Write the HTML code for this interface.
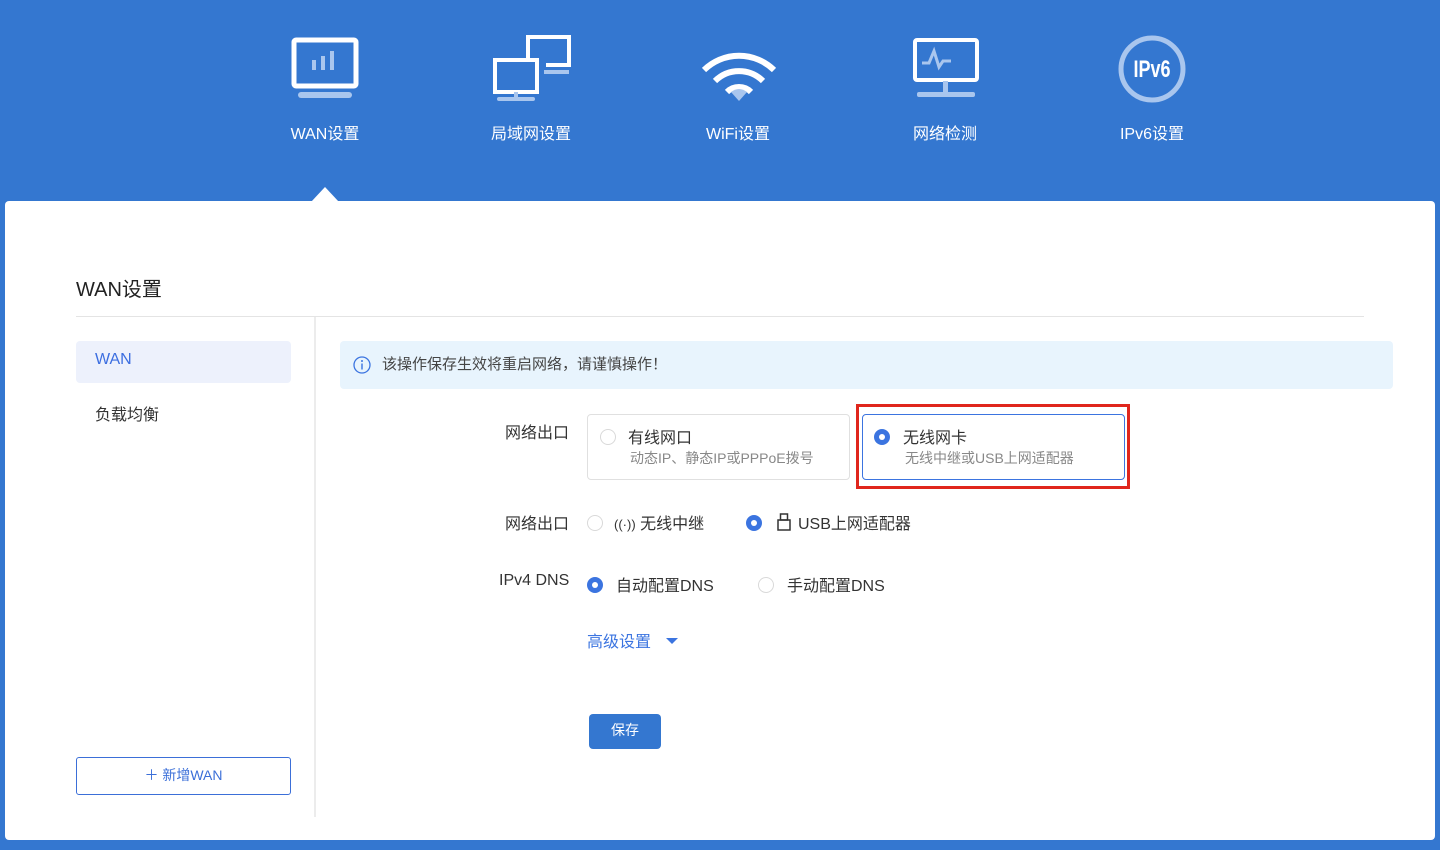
<!DOCTYPE html>
<html><head><meta charset="utf-8"><style>
*{margin:0;padding:0;box-sizing:border-box}
body{width:1440px;height:850px;background:#3477d0;position:relative;overflow:hidden;font-family:"Liberation Sans","Noto Sans CJK SC",sans-serif;color:#333}
.a{position:absolute}
.nav{color:#fff;font-size:16px;text-align:center;width:160px}
.card{left:5px;top:201px;width:1430px;height:639px;background:#fff;border-radius:4px}
.radio{position:absolute;width:16px;height:16px;border-radius:50%;border:1px solid #d9d9d9;background:#fff}
.radio.on{border:none;background:#3b74e0}
.radio.on:after{content:"";position:absolute;left:5px;top:5px;width:6px;height:6px;border-radius:50%;background:#fff}
.lbl{font-size:16px;color:#333}
</style></head><body>
<svg class="a" style="left:290px;top:36px" width="70" height="64"><rect x="4" y="4" width="62" height="46" rx="2" fill="none" stroke="#fff" stroke-width="5"/><rect x="8" y="56" width="54" height="6" rx="3" fill="#a9c6ee"/><rect x="22" y="24" width="4" height="10" fill="#a9c6ee"/><rect x="31" y="20" width="4" height="14" fill="#a9c6ee"/><rect x="40" y="15" width="4" height="19" fill="#a9c6ee"/></svg>
<svg class="a" style="left:492px;top:34px" width="80" height="70"><path d="M36 24 V3 H77 V31 H54" fill="none" stroke="#fff" stroke-width="4"/><rect x="52" y="36" width="25" height="4" fill="#a9c6ee"/><rect x="3" y="26" width="42" height="32" fill="none" stroke="#fff" stroke-width="4"/><rect x="22" y="58" width="4" height="6" fill="#a9c6ee"/><rect x="5" y="63" width="38" height="4" rx="2" fill="#a9c6ee"/></svg>
<svg class="a" style="left:700px;top:44px" width="78" height="58"><path d="M4 26 A50 50 0 0 1 74 26" fill="none" stroke="#fff" stroke-width="6"/><path d="M15 37 A34 34 0 0 1 63 37" fill="none" stroke="#fff" stroke-width="6"/><path d="M27 48 A17 17 0 0 1 51 48" fill="none" stroke="#fff" stroke-width="6"/><path d="M31 48 Q39 42 47 48 L39 57 Z" fill="#a9c6ee"/></svg>
<svg class="a" style="left:912px;top:37px" width="68" height="62"><rect x="3" y="3" width="62" height="40" rx="2" fill="none" stroke="#fff" stroke-width="4"/><path d="M10 26h7l5-12 5 16 4-6h8" fill="none" stroke="#a9c6ee" stroke-width="3"/><rect x="31" y="44" width="5" height="12" fill="#a9c6ee"/><rect x="5" y="55" width="58" height="5" rx="2" fill="#a9c6ee"/></svg>
<svg class="a" style="left:1116px;top:33px" width="72" height="72"><circle cx="36" cy="36" r="31" fill="none" stroke="#a9c6ee" stroke-width="5"/><text x="0" y="0" transform="translate(36,44) scale(0.75,1)" text-anchor="middle" fill="#fff" font-size="24" font-weight="bold" font-family="Liberation Sans,sans-serif">IPv6</text></svg>
<div class="a nav" style="left:245px;top:120px">WAN设置</div>
<div class="a nav" style="left:451px;top:120px">局域网设置</div>
<div class="a nav" style="left:658px;top:120px">WiFi设置</div>
<div class="a nav" style="left:865px;top:120px">网络检测</div>
<div class="a nav" style="left:1072px;top:120px">IPv6设置</div>
<div class="a" style="left:311px;top:187px;width:0;height:0;border-left:14px solid transparent;border-right:14px solid transparent;border-bottom:15px solid #fff"></div>
<div class="a card"></div>
<div class="a" style="left:76px;top:273px;font-size:20px;color:#222">WAN设置</div>
<div class="a" style="left:76px;top:316px;width:1288px;height:1px;background:#e4e4e4"></div>
<div class="a" style="left:314px;top:317px;width:2px;height:500px;background:#ececec"></div>
<div class="a" style="left:76px;top:341px;width:215px;height:42px;background:#edf1fc;border-radius:4px"></div>
<div class="a" style="left:95px;top:351px;font-size:16px;color:#3c6ee0">WAN</div>
<div class="a" style="left:95px;top:401px;font-size:16px">负载均衡</div>
<div class="a" style="left:76px;top:757px;width:215px;height:38px;border:1px solid #3b6fd8;border-radius:3px;color:#3b6fd8;font-size:14px;text-align:center;line-height:34px">＋ 新增WAN</div>
<div class="a" style="left:340px;top:341px;width:1053px;height:48px;background:#e8f4fd;border-radius:4px"></div>
<svg class="a" style="left:353px;top:356px" width="18" height="18"><circle cx="9" cy="9" r="8" fill="none" stroke="#3b74e0" stroke-width="1.3"/><rect x="8.3" y="7.5" width="1.4" height="6" fill="#3b74e0"/><circle cx="9" cy="5" r="1" fill="#3b74e0"/></svg>
<div class="a" style="left:382px;top:353px;font-size:15px;color:#444">该操作保存生效将重启网络，请谨慎操作！</div>
<div class="a lbl" style="left:505px;top:419px">网络出口</div>
<div class="a" style="left:587px;top:414px;width:263px;height:66px;border:1px solid #e0e0e0;border-radius:4px"></div>
<div class="radio" style="left:600px;top:429px"></div>
<div class="a lbl" style="left:628px;top:424px">有线网口</div>
<div class="a" style="left:630px;top:448px;font-size:14px;color:#888">动态IP、静态IP或PPPoE拨号</div>
<div class="a" style="left:856px;top:404px;width:274px;height:85px;border:3px solid #e0261d"></div>
<div class="a" style="left:862px;top:414px;width:263px;height:66px;border:1px solid #3b74e0;border-radius:4px"></div>
<div class="radio on" style="left:874px;top:429px"></div>
<div class="a lbl" style="left:903px;top:424px">无线网卡</div>
<div class="a" style="left:905px;top:448px;font-size:14px;color:#888">无线中继或USB上网适配器</div>
<div class="a lbl" style="left:505px;top:510px">网络出口</div>
<div class="radio" style="left:587px;top:515px"></div>
<div class="a lbl" style="left:614px;top:510px"><span style="font-size:13px">((·))</span> 无线中继</div>
<div class="radio on" style="left:746px;top:515px"></div>
<svg class="a" style="left:777px;top:513px" width="14" height="18"><rect x="1" y="7" width="12" height="10" fill="none" stroke="#333" stroke-width="1.5"/><rect x="3.5" y="1" width="7" height="6" fill="none" stroke="#333" stroke-width="1.5"/></svg>
<div class="a lbl" style="left:798px;top:510px">USB上网适配器</div>
<div class="a lbl" style="left:499px;top:572px">IPv4 DNS</div>
<div class="radio on" style="left:587px;top:577px"></div>
<div class="a lbl" style="left:616px;top:572px">自动配置DNS</div>
<div class="radio" style="left:758px;top:577px"></div>
<div class="a lbl" style="left:787px;top:572px">手动配置DNS</div>
<div class="a" style="left:587px;top:628px;font-size:16px;color:#3b74e0">高级设置</div>
<div class="a" style="left:666px;top:638px;width:0;height:0;border-left:6px solid transparent;border-right:6px solid transparent;border-top:6px solid #3b74e0"></div>
<div class="a" style="left:589px;top:714px;width:72px;height:35px;background:#3477d0;border-radius:4px;color:#fff;font-size:14px;text-align:center;line-height:33px">保存</div>
</body></html>
